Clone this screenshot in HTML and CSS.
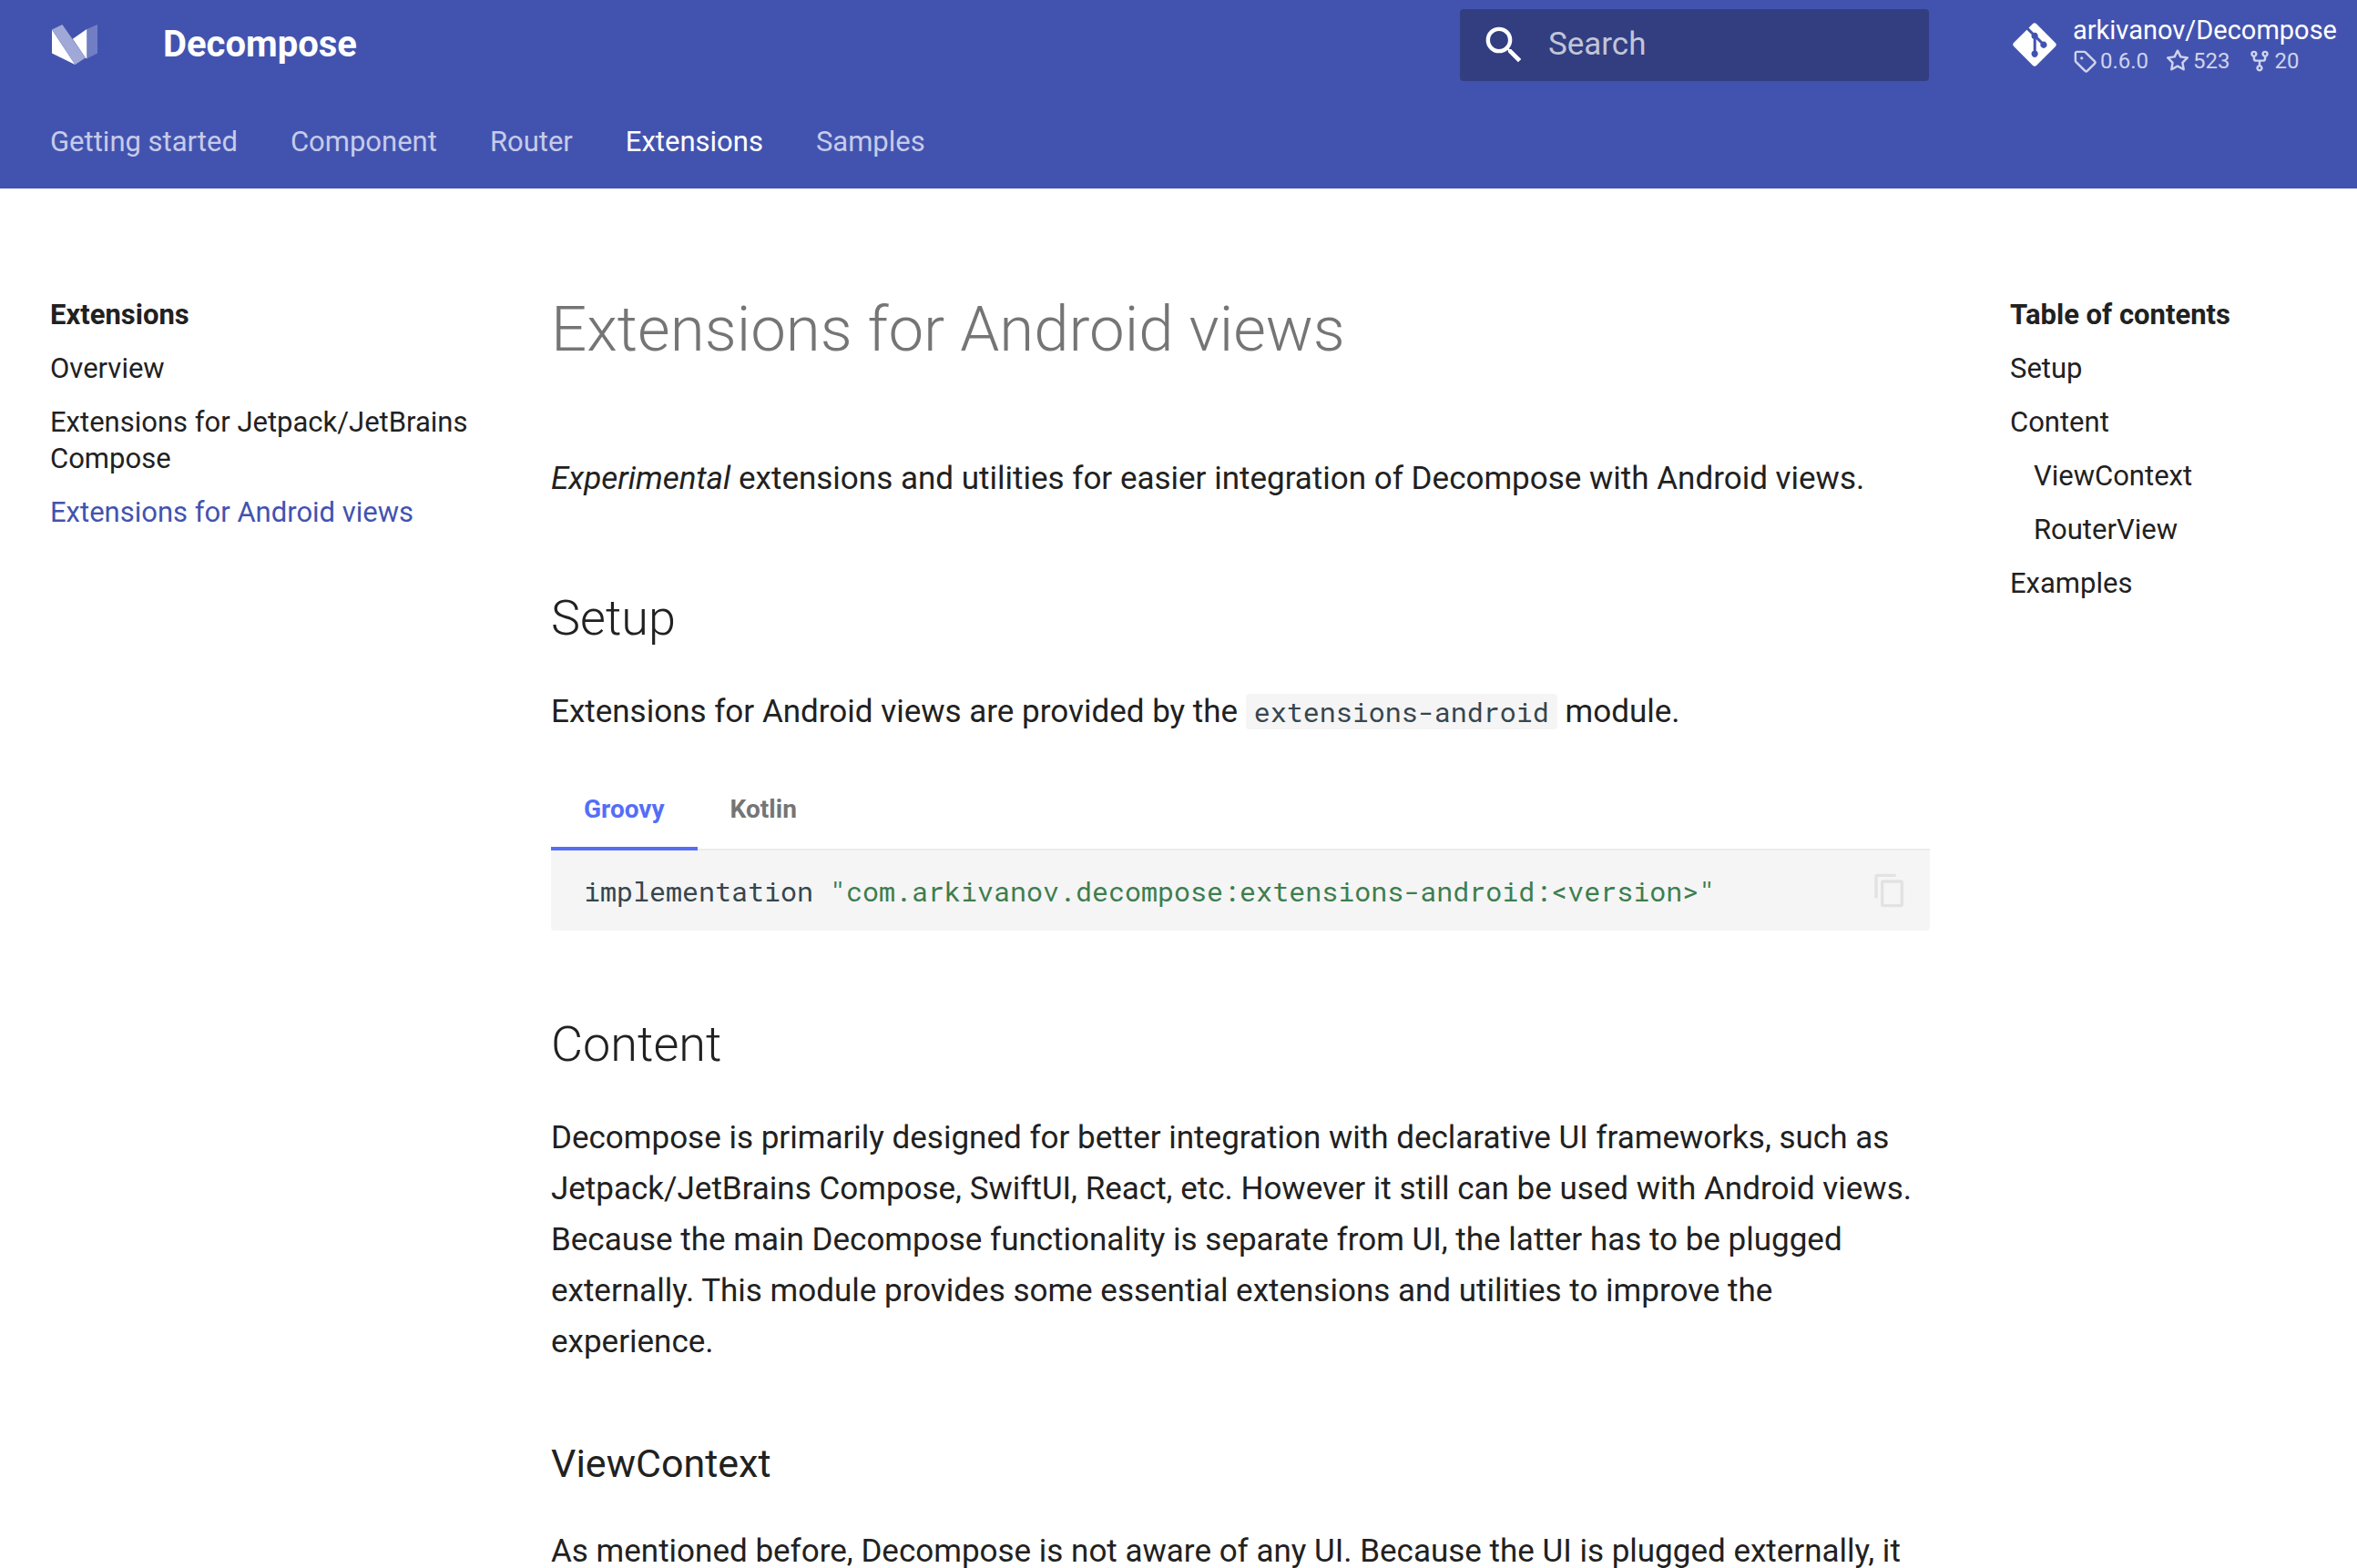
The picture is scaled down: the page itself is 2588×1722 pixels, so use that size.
FILE: index.html
```html
<!DOCTYPE html>
<html lang="en">
<head>
<meta charset="utf-8">
<meta name="viewport" content="width=device-width, initial-scale=1">
<title>Extensions for Android views - Decompose</title>
<link rel="stylesheet" href="styles.css">
</head>
<body>
<header class="header">
  <div class="header-bar">
    <a class="logo" href="#" aria-label="Decompose">
      <svg viewBox="51 51 149 131" aria-hidden="true">
        <path class="logo-side" d="M165 66 200 51v94l-35 18z"/>
        <path d="M51 67v78l76 37zM119 98l46-32v97l-4-3z"/>
        <path class="logo-band" d="M51 67 85 51l76 109-34 22z"/>
      </svg>
    </a>
    <div class="site-name">Decompose</div>
    <form class="search" role="search">
      <label class="search-icon" for="q">
        <svg viewBox="0 0 24 24" aria-hidden="true"><path d="M9.5 3A6.5 6.5 0 0 1 16 9.500c0 1.610-.590 3.090-1.560 4.230l.270.270h.790l5 5-1.500 1.500-5-5v-.790l-.270-.270A6.516 6.516 0 0 1 9.500 16 6.500 6.500 0 0 1 3 9.500 6.500 6.500 0 0 1 9.500 3m0 2C7 5 5 7 5 9.500S7 14 9.500 14 14 12 14 9.500 12 5 9.500 5z"/></svg>
      </label>
      <input id="q" class="search-input" type="text" placeholder="Search" aria-label="Search">
    </form>
    <a class="repo" href="#">
      <svg class="repo-logo" viewBox="0 0 448 512" aria-hidden="true"><path d="M439.550 236.050 244 40.450a28.870 28.870 0 0 0-40.810 0l-40.660 40.630 51.520 51.520c27.060-9.140 52.680 16.770 43.390 43.680l49.660 49.660c34.230-11.800 61.180 31 35.470 56.690-26.490 26.490-70.210-2.870-56-37.340L240.220 199v121.850c25.300 12.540 22.260 41.850 9.080 55a34.340 34.340 0 0 1-48.550 0c-17.570-17.600-11.070-46.910 11.250-56v-123c-20.800-8.510-24.600-30.740-18.640-45L142.570 101 8.450 235.140a28.860 28.860 0 0 0 0 40.810l195.610 195.600a28.860 28.860 0 0 0 40.800 0l194.690-194.690a28.860 28.860 0 0 0 0-40.810z"/></svg>
      <span class="repo-text">
        <span class="repo-name">arkivanov/Decompose</span>
        <span class="facts">
          <span class="fact"><svg viewBox="0 0 16 16" aria-hidden="true"><path fill-rule="evenodd" d="M2.500 7.775V2.750a.250.250 0 0 1 .250-.250h5.025a.250.250 0 0 1 .177.073l6.250 6.250a.250.250 0 0 1 0 .354l-5.025 5.025a.250.250 0 0 1-.354 0l-6.250-6.250a.250.250 0 0 1-.073-.177zm-1.500 0V2.750C1 1.784 1.784 1 2.750 1h5.025c.464 0 .910.184 1.238.513l6.250 6.250a1.750 1.750 0 0 1 0 2.474l-5.026 5.026a1.750 1.750 0 0 1-2.474 0l-6.250-6.250A1.750 1.750 0 0 1 1 7.775zM6 5a1 1 0 1 0 0 2 1 1 0 0 0 0-2z"/></svg>0.6.0</span>
          <span class="fact"><svg viewBox="0 0 16 16" aria-hidden="true"><path fill-rule="evenodd" d="M8 .250a.750.750 0 0 1 .673.418l1.882 3.815 4.210.612a.750.750 0 0 1 .416 1.279l-3.046 2.970.719 4.192a.750.750 0 0 1-1.088.791L8 12.347l-3.766 1.980a.750.750 0 0 1-1.088-.790l.720-4.194L.818 6.374a.750.750 0 0 1 .416-1.280l4.210-.611L7.327.668A.750.750 0 0 1 8 .250zm0 2.445L6.615 5.500a.750.750 0 0 1-.564.410l-3.097.450 2.240 2.184a.750.750 0 0 1 .216.664l-.528 3.084 2.769-1.456a.750.750 0 0 1 .698 0l2.770 1.456-.530-3.084a.750.750 0 0 1 .216-.664l2.240-2.183-3.096-.450a.750.750 0 0 1-.564-.410L8 2.694z"/></svg>523</span>
          <span class="fact"><svg viewBox="0 0 16 16" aria-hidden="true"><path fill-rule="evenodd" d="M5 3.250a.750.750 0 1 1-1.500 0 .750.750 0 0 1 1.500 0zm0 2.122a2.250 2.250 0 1 0-1.500 0v.878A2.250 2.250 0 0 0 5.750 8.500h1.500v2.128a2.251 2.251 0 1 0 1.500 0V8.500h1.500a2.250 2.250 0 0 0 2.250-2.250v-.878a2.250 2.250 0 1 0-1.500 0v.878a.750.750 0 0 1-.750.750h-4.500A.750.750 0 0 1 5 6.250v-.878zm3.750 7.378a.750.750 0 1 1-1.500 0 .750.750 0 0 1 1.500 0zm3-8.750a.750.750 0 1 0 0-1.500.750.750 0 0 0 0 1.500z"/></svg>20</span>
        </span>
      </span>
    </a>
  </div>
  <nav class="tabs" aria-label="Tabs">
    <a href="#">Getting started</a>
    <a href="#">Component</a>
    <a href="#">Router</a>
    <a class="current" href="#">Extensions</a>
    <a href="#">Samples</a>
  </nav>
</header>
<div class="layout">
  <nav class="side" aria-label="Navigation">
    <p class="side-title">Extensions</p>
    <a href="#">Overview</a>
    <a href="#">Extensions for Jetpack/JetBrains Compose</a>
    <a class="current" href="#">Extensions for Android views</a>
  </nav>
  <main class="article">
    <h1>Extensions for Android views</h1>
    <p><em>Experimental</em> extensions and utilities for easier integration of Decompose with Android views.</p>
    <h2>Setup</h2>
    <p>Extensions for Android views are provided by the <code class="inline">extensions-android</code> module.</p>
    <div class="code-tabs" role="tablist">
      <button class="code-tab selected" type="button" role="tab" aria-selected="true">Groovy</button>
      <button class="code-tab" type="button" role="tab" aria-selected="false">Kotlin</button>
    </div>
    <div class="code-block">
      <pre><code>implementation <span class="string">"com.arkivanov.decompose:extensions-android:&lt;version&gt;"</span></code></pre>
      <button class="copy" type="button" aria-label="Copy to clipboard">
        <svg viewBox="0 0 24 24" aria-hidden="true"><path d="M19 21H8V7h11m0-2H8a2 2 0 0 0-2 2v14a2 2 0 0 0 2 2h11a2 2 0 0 0 2-2V7a2 2 0 0 0-2-2m-3-4H4a2 2 0 0 0-2 2v14h2V3h12V1z"/></svg>
      </button>
    </div>
    <h2>Content</h2>
    <p>Decompose is primarily designed for better integration with declarative UI frameworks, such as Jetpack/JetBrains Compose, SwiftUI, React, etc. However it still can be used with Android views. Because the main Decompose functionality is separate from UI, the latter has to be plugged externally. This module provides some essential extensions and utilities to improve the experience.</p>
    <h3>ViewContext</h3>
    <p>As mentioned before, Decompose is not aware of any UI. Because the UI is plugged externally, it</p>
  </main>
  <nav class="side toc" aria-label="Table of contents">
    <p class="side-title">Table of contents</p>
    <a href="#">Setup</a>
    <a href="#">Content</a>
    <a class="nested" href="#">ViewContext</a>
    <a class="nested" href="#">RouterView</a>
    <a href="#">Examples</a>
  </nav>
</div>
</body>
</html>
```
FILE: styles.css
```css
* {
  box-sizing: border-box;
}

body {
  margin: 0;
  background: #fff;
  color: #212121;
  font-family: Roboto, "Liberation Sans", sans-serif;
  font-size: 35px;
  line-height: 56px;
}

a {
  color: inherit;
  text-decoration: none;
}

p,
h1,
h2,
h3,
pre {
  margin: 0;
}

button {
  border: 0;
  background: none;
  font-family: inherit;
}

svg {
  display: block;
  fill: currentColor;
}

/* Header */
.header {
  background: #4253af;
  color: #fff;
}

.header-bar {
  display: flex;
  align-items: center;
  height: 98px;
  padding: 0 22px 0 57px;
}

.logo svg {
  width: 50px;
  height: 44px;
}

.logo-side {
  opacity: 0.25;
}

.logo-band {
  fill: #a0a8d7;
}

.site-name {
  flex: 1;
  margin-left: 72px;
  font-size: 40px;
  font-weight: 700;
}

.search {
  display: flex;
  align-items: center;
  width: 515px;
  height: 79px;
  margin-right: 92px;
  border-radius: 4px;
  background: #323e80;
}

.search-icon {
  padding: 0 22px;
}

.search-icon svg {
  width: 53px;
  height: 53px;
}

.search-input {
  flex: 1;
  min-width: 0;
  padding: 0;
  border: 0;
  background: none;
  color: #fff;
  font: 400 35px/56px Roboto, "Liberation Sans", sans-serif;
}

.search-input::placeholder {
  color: #c1c5d8;
  opacity: 1;
}

.repo {
  display: flex;
  align-items: center;
  gap: 18px;
  font-size: 29px;
  line-height: 36px;
}

.repo-logo {
  width: 48px;
  height: 54px;
}

.repo-text,
.facts,
.fact {
  display: flex;
}

.repo-text {
  flex-direction: column;
}

.facts {
  gap: 19px;
  color: #cfd3ec;
  font-size: 24px;
  line-height: 32px;
}

.fact {
  align-items: center;
  gap: 4px;
}

.fact svg {
  width: 26px;
  height: 26px;
}

.tabs {
  display: flex;
  gap: 58px;
  height: 109px;
  padding: 30px 55px;
  color: #c6cbe9;
  font-size: 31px;
  line-height: 56px;
}

.tabs .current {
  color: #fff;
}

/* Page columns */
.layout {
  display: grid;
  grid-template-columns: 462px minmax(0, 1fr) 357px;
  column-gap: 88px;
  padding: 119px 24px 0 55px;
}

.side {
  display: flex;
  flex-direction: column;
  gap: 19px;
  font-size: 31px;
  line-height: 40px;
}

.side-title {
  font-weight: 700;
}

.side .current {
  color: #4253af;
}

.nested {
  padding-left: 26px;
}

/* Article */
.article h1 {
  margin-bottom: 100px;
  color: #757575;
  font-size: 69px;
  font-weight: 300;
  line-height: 72px;
}

.article h2 {
  margin: 86px 0 36px;
  font-size: 54px;
  font-weight: 300;
  line-height: 78px;
}

.article h3 {
  margin: 72px 0 36px;
  font-size: 43px;
  font-weight: 400;
  line-height: 66px;
}

code {
  color: #36464e;
  font-family: "Roboto Mono", "Liberation Mono", monospace;
  font-size: 30px;
}

.inline {
  padding: 0 9px;
  border-radius: 4px;
  background: #f5f5f5;
}

.code-tabs {
  display: flex;
  margin-top: 36px;
  border-bottom: 2px solid #ececec;
}

.code-tab {
  height: 88px;
  margin-bottom: -2px;
  padding: 0 36px;
  border-bottom: 4px solid transparent;
  color: #757575;
  font-size: 28px;
  font-weight: 700;
}

.code-tab.selected {
  border-color: #546ef7;
  color: #546ef7;
}

.code-block {
  display: flex;
  align-items: center;
  justify-content: space-between;
  height: 88px;
  padding: 0 24px 0 36px;
  border-radius: 0 0 4px 4px;
  background: #f5f5f5;
}

.string {
  color: #3d7e4f;
}

.copy {
  padding: 0;
  color: #e2e2e2;
}

.copy svg {
  width: 40px;
  height: 40px;
}
```
